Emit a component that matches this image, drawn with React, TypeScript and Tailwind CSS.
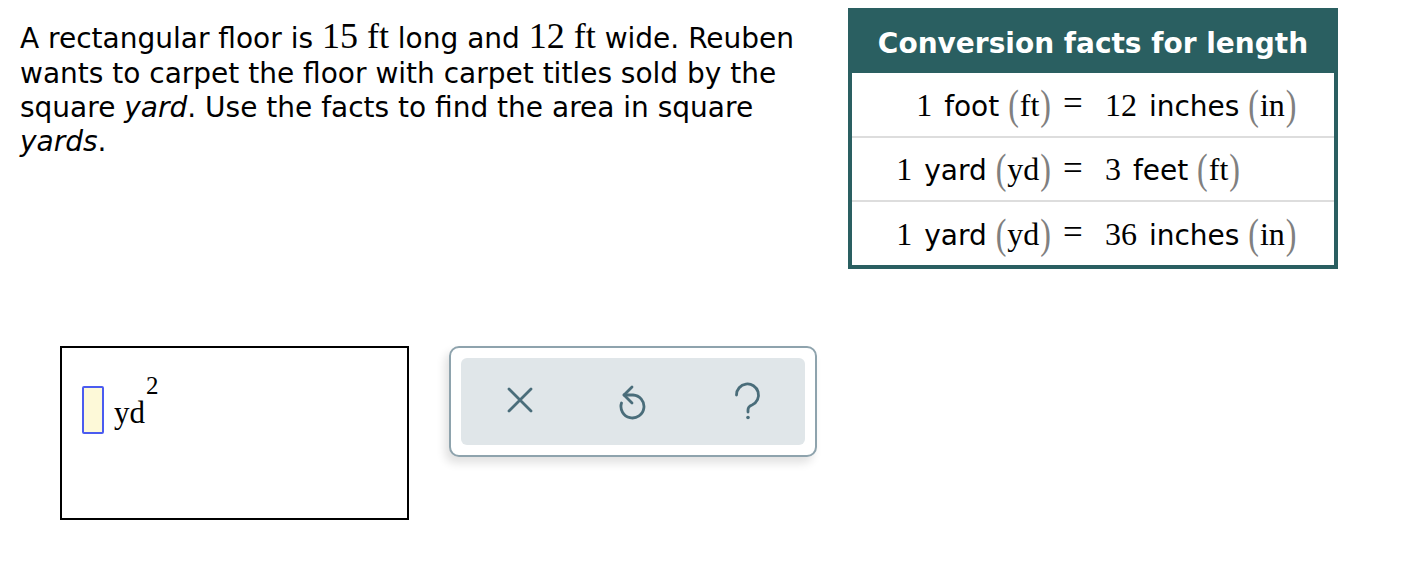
import React from "react";

// Unit conversion problem: prompt, facts table, answer box and tool buttons.

const SANS = "font-['DejaVu_Sans','Verdana',sans-serif]";
const SERIF = "font-['Liberation_Serif','Times_New_Roman',serif]";

function M({ children }: { children: React.ReactNode }) {
  return <span className={`${SERIF} text-[32px]`}>{children}</span>;
}

function Paren({ children }: { children: React.ReactNode }) {
  return (
    <span className={`${SERIF} text-[32px]`}>
      <span className="inline-block text-[#808080] scale-y-[1.3] mr-[1px]">(</span>
      {children}
      <span className="inline-block text-[#808080] scale-y-[1.3] ml-[1px]">)</span>
    </span>
  );
}

const FACTS = [
  {
    left: (
      <>
        <M>1</M> <span className="ml-[3px]">foot</span> <Paren>ft</Paren>
      </>
    ),
    right: (
      <>
        <M>12</M> <span className="ml-[3px]">inches</span> <Paren>in</Paren>
      </>
    ),
  },
  {
    left: (
      <>
        <M>1</M> <span className="ml-[3px]">yard</span> <Paren>yd</Paren>
      </>
    ),
    right: (
      <>
        <M>3</M> <span className="ml-[3px]">feet</span> <Paren>ft</Paren>
      </>
    ),
  },
  {
    left: (
      <>
        <M>1</M> <span className="ml-[3px]">yard</span> <Paren>yd</Paren>
      </>
    ),
    right: (
      <>
        <M>36</M> <span className="ml-[3px]">inches</span> <Paren>in</Paren>
      </>
    ),
  },
];

function FactsTable() {
  return (
    <div className="w-[490px] border-[4px] border-[#2a5f61] bg-white">
      <div
        className={`${SANS} h-[61px] bg-[#2a5f61] text-white font-bold text-[28px] flex items-center justify-center pt-[2px]`}
      >
        Conversion facts for length
      </div>
      <table className="w-full border-collapse table-fixed">
        <tbody>
          {FACTS.map((f, i) => (
            <tr
              key={i}
              className={`h-[64px] ${i > 0 ? "border-t-2 border-[#dddddd]" : ""}`}
            >
              <td className={`${SANS} w-[199px] text-[28px] text-black text-right whitespace-nowrap`}>
                {f.left}
              </td>
              <td className={`${SERIF} w-[54px] text-[35px] text-black text-left pl-[12px]`}>=</td>
              <td className={`${SANS} text-[28px] text-black text-left whitespace-nowrap`}>
                {f.right}
              </td>
            </tr>
          ))}
        </tbody>
      </table>
    </div>
  );
}

function UndoIcon() {
  return (
    <svg width="28" height="36" viewBox="0 0 28 36" fill="none" stroke="#4a6d7a" strokeWidth="2.8" strokeLinecap="round" strokeLinejoin="round">
      <path d="M13 3 L5 11 L13 19" />
      <path d="M5 11 H14 A11.5 11.5 0 1 1 2.5 19" />
    </svg>
  );
}

function XIcon() {
  return (
    <svg width="26" height="26" viewBox="0 0 26 26" fill="none" stroke="#4a6d7a" strokeWidth="2.8" strokeLinecap="round">
      <path d="M2 2 L24 24 M24 2 L2 24" />
    </svg>
  );
}

function HelpIcon() {
  return (
    <svg width="30" height="40" viewBox="0 0 30 40" fill="none" stroke="#4a6d7a" strokeWidth="2.8" strokeLinecap="round" strokeLinejoin="round">
      <path d="M3.5 14 A11 11 0 1 1 19 24 Q15 25.5 15 29 V31" />
      <circle cx="15" cy="36.5" r="1.8" fill="#4a6d7a" stroke="none" />
    </svg>
  );
}

export default function App() {
  return (
    <div className="w-[1416px] h-[572px] bg-white text-black">
      {/* Top: prompt + facts */}
      <div className="flex items-start">
        <div className={`${SANS} w-[848px] shrink-0 pl-[20px] pr-[20px] pt-[15px] text-[28px] leading-[34px]`}>
          <p>
            A rectangular floor is{" "}
            <span className={`${SERIF} text-[36px] leading-[42px]`}>15 ft</span> long and{" "}
            <span className={`${SERIF} text-[36px] leading-[42px]`}>12 ft</span> wide. Reuben wants to
            carpet the floor with carpet titles sold by the square <i>yard</i>. Use the facts to find the
            area in square <i>yards</i>.
          </p>
        </div>
        <div className="pt-[8px]">
          <FactsTable />
        </div>
      </div>

      {/* Answer area */}
      <div className="flex items-start mt-[77px] pl-[60px] gap-[40px]">
        <div className="w-[349px] h-[174px] border-2 border-black pl-[20px] pt-[38px]">
          <div className="flex items-end">
            <div className="w-[22px] h-[48px] bg-[#fdf9d8] border-2 border-[#4b5cf0] rounded-[2px]" />
            <span className={`${SERIF} text-[31px] ml-[10px] leading-[38px]`}>
              yd
              <span className="relative -top-[29px] text-[25px] ml-[1px]">2</span>
            </span>
          </div>
        </div>

        <div className="w-[368px] h-[111px] rounded-[10px] border-2 border-[#8ea3ad] bg-white p-[10px] shadow-[-4px_6px_10px_rgba(0,0,0,0.12)]">
          <div className="h-full rounded-[6px] bg-[#e0e6e9] flex items-center">
            <div className="w-[116px] flex justify-center pl-[4px] pb-[4px]">
              <XIcon />
            </div>
            <div className="w-[116px] flex justify-center">
              <UndoIcon />
            </div>
            <div className="w-[116px] flex justify-center pb-[2px]">
              <HelpIcon />
            </div>
          </div>
        </div>
      </div>
    </div>
  );
}
